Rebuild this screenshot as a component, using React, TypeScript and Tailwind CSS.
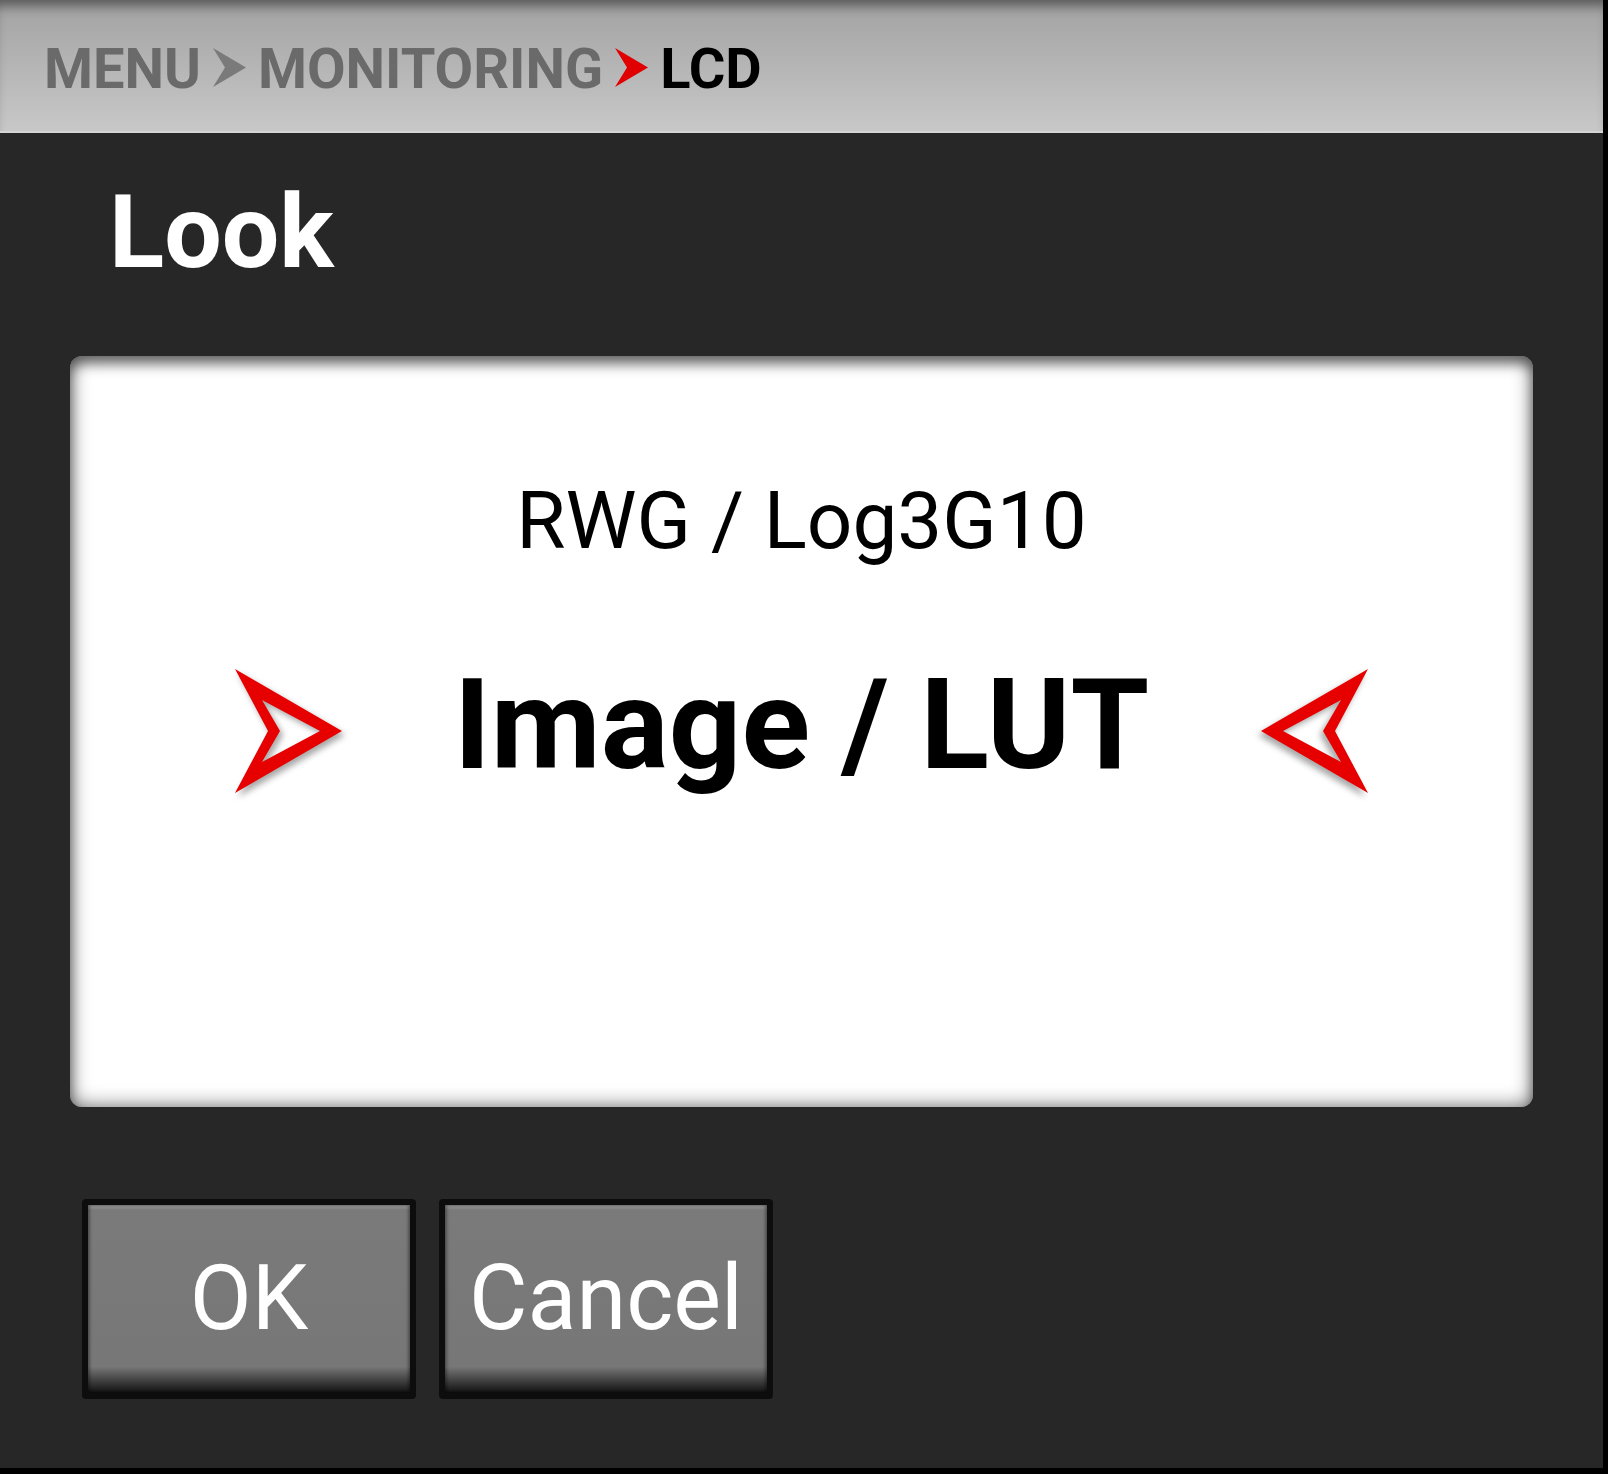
import React from 'react';

const Chevron = ({ color }: { color: string }) => (
  <svg className="w-[33px] h-[39px] mt-[7px] shrink-0" viewBox="0 0 33 39">
    <polygon points="0,0 33,19.5 0,39 12,19.5" fill={color} />
  </svg>
);

const PickerArrow = ({ flip }: { flip?: boolean }) => (
  <svg
    className={`w-[107px] h-[124px] mt-[8px] shrink-0 drop-shadow-[3px_4px_3px_rgba(0,0,0,0.35)] ${flip ? '-scale-x-100' : ''}`}
    viewBox="0 0 107 124"
  >
    <path
      fillRule="evenodd"
      fill="#e60000"
      d="M0 0 L107 62 L0 124 L33 62 Z M27 31 L45 62 L27 93 L85 62 Z"
    />
  </svg>
);

const DialogButton = ({ label }: { label: string }) => (
  <div className="w-[334px] h-[200px] bg-[#0d0d0d] rounded-[4px] p-[6px]">
    <div className="w-full h-full flex items-center justify-center text-white text-[90px] leading-none bg-[linear-gradient(to_bottom,#9c9c9c_0px,#7a7a7a_5px,#777777_86%,#101010_100%)] shadow-[inset_2px_0_3px_rgba(0,0,0,0.35),inset_-2px_0_3px_rgba(0,0,0,0.35)]">
      {label}
    </div>
  </div>
);

export default function App() {
  return (
    <div className="w-[1608px] h-[1474px] bg-black">
      <div className="w-[1603px] h-[1468px] bg-[#272727] flex flex-col font-['Roboto',sans-serif]">
        {/* Breadcrumb header */}
        <div className="h-[133px] shrink-0 bg-linear-to-b from-[#a2a2a2] to-[#c8c8c8] border-b-2 border-[#d4d4d4] shadow-[inset_0_12px_12px_-6px_rgba(0,0,0,0.45)] flex items-start pt-[41px] pl-[44px] gap-[12px] text-[56px] leading-none font-bold">
          <span className="text-[#6a6a6a]">MENU</span>
          <Chevron color="#7a7a7a" />
          <span className="text-[#6a6a6a]">MONITORING</span>
          <Chevron color="#e00000" />
          <span className="text-black">LCD</span>
        </div>

        {/* Title */}
        <div className="mt-[48px] pl-[109px] text-[102px] leading-none font-bold text-white">
          Look
        </div>

        {/* Value picker */}
        <div className="mt-[73px] ml-[70px] w-[1463px] h-[751px] shrink-0 bg-white rounded-[12px] shadow-[inset_0_0_20px_rgba(0,0,0,0.6),inset_0_8px_12px_rgba(0,0,0,0.4)] flex flex-col items-center pt-[125px]">
          <div className="text-[80px] leading-none text-black">RWG / Log3G10</div>
          <div className="mt-[100px] w-full flex justify-between items-start px-[165px]">
            <PickerArrow />
            <div className="text-[127px] leading-none font-bold text-black">Image / LUT</div>
            <PickerArrow flip />
          </div>
        </div>

        {/* Actions */}
        <div className="mt-[92px] ml-[82px] flex gap-[23px]">
          <DialogButton label="OK" />
          <DialogButton label="Cancel" />
        </div>
      </div>
    </div>
  );
}
